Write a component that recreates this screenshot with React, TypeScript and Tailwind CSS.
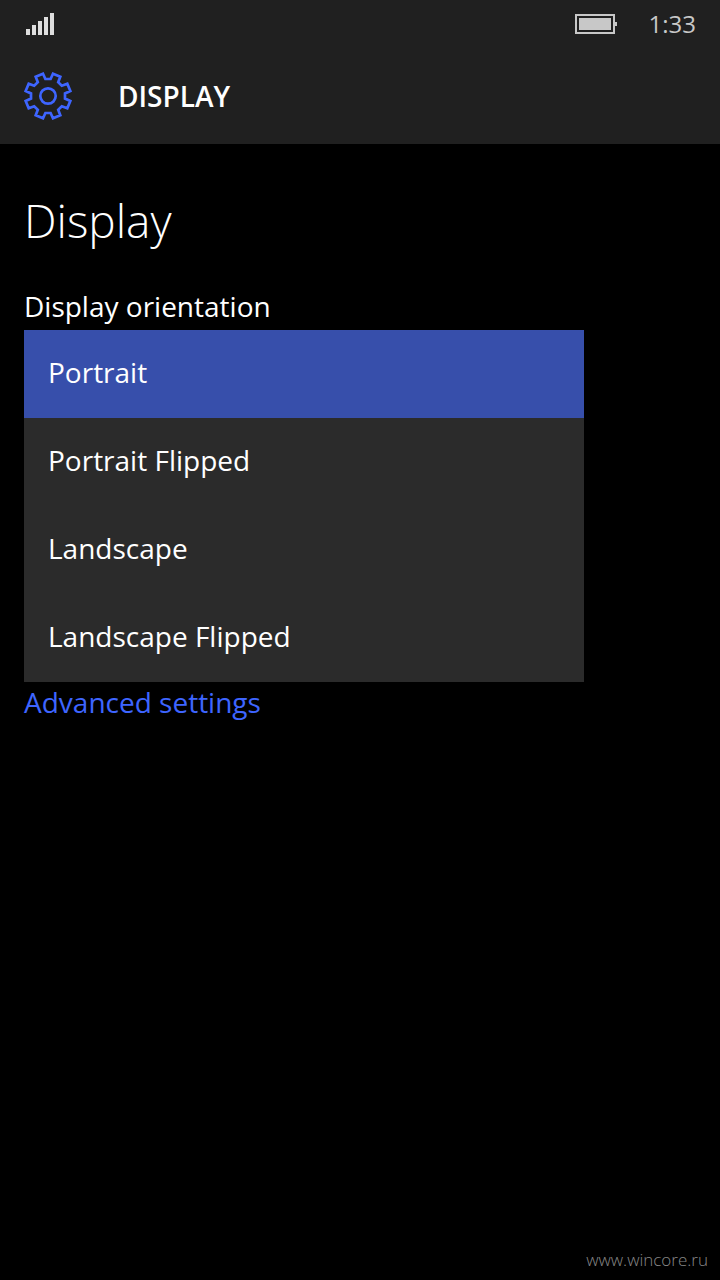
import { useState } from "react";

const ORIENTATIONS = ["Portrait", "Portrait Flipped", "Landscape", "Landscape Flipped"];

function SignalIcon() {
  return (
    <svg width="28" height="22" viewBox="0 0 28 22" fill="#dedede" aria-hidden="true">
      <path d="M0 16h4v6H0zM6 12h4v10H6zM12 8h4v14h-4zM18 4h4v18h-4zM24 0h4v22h-4z" />
    </svg>
  );
}

function BatteryIcon() {
  return (
    <svg width="42" height="20" viewBox="0 0 42 20" fill="#c8c8c8" aria-hidden="true">
      <path fillRule="evenodd" d="M0 0h40v20H0zM2 2v16h36V2z" />
      <path d="M4 4h32v12H4zM40 8h2v4h-2z" />
    </svg>
  );
}

function GearIcon() {
  return (
    <svg
      width="48"
      height="48"
      viewBox="-24 -24 48 48"
      fill="none"
      stroke="#3e65ff"
      strokeWidth="2.7"
      aria-hidden="true"
    >
      <path d="M-5 -22.3L-2.6 -17H2.6L5 -22.3L12.3 -19.3L10.2 -13.8L13.8 -10.2L19.3 -12.3L22.3 -5L17 -2.6V2.6L22.3 5L19.3 12.3L13.8 10.2L10.2 13.8L12.3 19.3L5 22.3L2.6 17H-2.6L-5 22.3L-12.3 19.3L-10.2 13.8L-13.8 10.2L-19.3 12.3L-22.3 5L-17 2.6V-2.6L-22.3 -5L-19.3 -12.3L-13.8 -10.2L-10.2 -13.8L-12.3 -19.3Z" />
      <circle r="7.7" />
    </svg>
  );
}

export default function App() {
  const [orientation, setOrientation] = useState("Portrait");

  return (
    <div className="flex min-h-screen flex-col bg-black font-['Open_Sans',sans-serif] text-white">
      <header className="bg-[#202020]">
        {/* Status bar */}
        <div className="flex h-12 items-center px-6">
          <div className="pl-0.5">
            <SignalIcon />
          </div>
          <div className="ml-auto flex items-center gap-8">
            <BatteryIcon />
            <time className="text-2xl text-[#c8c8c8]">1:33</time>
          </div>
        </div>

        {/* App title */}
        <div className="flex h-24 items-center gap-[46px] px-6">
          <GearIcon />
          <span className="text-[28px] font-semibold">DISPLAY</span>
        </div>
      </header>

      <main className="flex flex-1 flex-col items-start px-6 pt-11">
        <h1 className="text-[46px] leading-[64px] font-light">Display</h1>

        <label htmlFor="orientation" className="mt-9 text-[28px] leading-[36px]">
          Display orientation
        </label>
        <select
          id="orientation"
          size={4}
          value={orientation}
          onChange={(e) => setOrientation(e.target.value)}
          className="mt-1.5 w-5/6 overflow-hidden bg-[#2b2b2b] text-[28px] outline-none"
        >
          {ORIENTATIONS.map((name) => (
            <option
              key={name}
              value={name}
              className="flex h-[88px] items-center px-6 pt-0 pb-1 text-white [-webkit-text-fill-color:#fff] checked:bg-[linear-gradient(#374fab,#374fab)]"
            >
              {name}
            </option>
          ))}
        </select>

        <a href="#advanced" className="mt-0.5 text-[28px] leading-[36px] text-[#3e65ff]">
          Advanced settings
        </a>
      </main>

      <footer className="px-3 pb-2 text-right text-[17px] leading-6 font-light text-[#888]">
        www.wincore.ru
      </footer>
    </div>
  );
}
